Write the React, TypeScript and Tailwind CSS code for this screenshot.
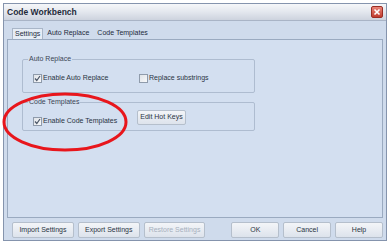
import React from "react";

const font = { fontFamily: '"Liberation Sans", Arial, sans-serif' };

function Check({ checked }: { checked: boolean }) {
  return (
    <span className="w-[9px] h-[9px] border border-[#8f9bab] bg-gradient-to-br from-[#dfe3e8] to-[#f8f9fa] flex items-center justify-center shrink-0">
      {checked && (
        <svg width="7" height="7" viewBox="0 0 7 7">
          <path d="M1 3.5 L2.8 5.5 L6 1" stroke="#4a5566" strokeWidth="1.2" fill="none" />
        </svg>
      )}
    </span>
  );
}

function Btn({ label, w, disabled }: { label: string; w: string; disabled?: boolean }) {
  return (
    <div
      className={`${w} h-[16px] border border-[#b5bfcc] rounded-[2px] bg-gradient-to-b from-[#f3f5f8] to-[#dde3ec] flex items-center justify-center text-[7px] ${disabled ? "text-[#a7b0bd]" : "text-[#2a3443]"}`}
    >
      {label}
    </div>
  );
}

export default function App() {
  return (
    <div className="w-[392px] h-[244px] bg-white relative overflow-hidden" style={font}>
      <div className="absolute left-[3px] top-[3px] w-[384px] h-[238px] border border-[#8594ad] bg-[#cfdbec] flex flex-col">
        <div className="h-[17px] bg-gradient-to-b from-[#f6f7f9] via-[#e3e7ee] to-[#cdd3de] flex items-center justify-between pl-[3px] pr-[3px] border-b border-[#a9b4c6]">
          <span className="text-[8.5px] font-semibold text-[#1f2a3a]">Code Workbench</span>
          <div className="w-[12px] h-[12px] rounded-[2px] bg-gradient-to-b from-[#e98478] to-[#c0392d] border border-[#9a2d24] flex items-center justify-center">
            <svg width="8" height="8" viewBox="0 0 8 8">
              <path d="M1.5 1.5 L6.5 6.5 M6.5 1.5 L1.5 6.5" stroke="white" strokeWidth="1.6" />
            </svg>
          </div>
        </div>
        <div className="flex-1 flex flex-col px-[3px] pt-[6px]">
          <div className="flex items-end h-[12px] text-[7px] text-[#1e2a3c]">
            <div className="ml-[5px] h-[11px] px-[2px] border border-b-0 border-[#a9b6c8] bg-[#e6edf6] flex items-center">Settings</div>
            <div className="ml-[4px] h-[11px] flex items-center">Auto Replace</div>
            <div className="ml-[8px] h-[11px] flex items-center">Code Templates</div>
          </div>
          <div className="w-[376px] h-[179px] border border-[#9aaac0] bg-[#d3dff0] relative">
            <div className="absolute left-[14px] top-[19px] w-[233px] h-[34px] border border-[#aebcd0] rounded-[2px]">
              <span className="absolute left-[5px] -top-[6px] px-[1px] bg-[#d3dff0] text-[7px] text-[#3b4656]">Auto Replace</span>
              <div className="absolute left-[10px] top-[13px] flex items-center gap-[1px] text-[7px] text-[#2a3443]">
                <Check checked />
                <span>Enable Auto Replace</span>
              </div>
              <div className="absolute left-[116px] top-[13px] flex items-center gap-[1px] text-[7px] text-[#2a3443]">
                <Check checked={false} />
                <span>Replace substrings</span>
              </div>
            </div>
            <div className="absolute left-[14px] top-[62px] w-[233px] h-[29px] border border-[#aebcd0] rounded-[2px]">
              <span className="absolute left-[5px] -top-[6px] px-[1px] bg-[#d3dff0] text-[7px] text-[#3b4656]">Code Templates</span>
              <div className="absolute left-[10px] top-[13px] flex items-center gap-[1px] text-[7px] text-[#2a3443]">
                <Check checked />
                <span>Enable Code Templates</span>
              </div>
              <div className="absolute left-[114px] top-[7px] w-[49px] h-[15px] border border-[#b5bfcc] rounded-[2px] bg-gradient-to-b from-[#f3f5f8] to-[#dde3ec] flex items-center justify-center text-[7px] text-[#2a3443]">
                Edit Hot Keys
              </div>
            </div>
          </div>
          <div className="flex items-center mt-[4px] ml-[5px]">
            <Btn label="Import Settings" w="w-[62px]" />
            <div className="w-[4px]" />
            <Btn label="Export Settings" w="w-[62px]" />
            <div className="w-[4px]" />
            <Btn label="Restore Settings" w="w-[62px]" disabled />
            <div className="w-[26px]" />
            <Btn label="OK" w="w-[48px]" />
            <div className="w-[4px]" />
            <Btn label="Cancel" w="w-[48px]" />
            <div className="w-[4px]" />
            <Btn label="Help" w="w-[48px]" />
          </div>
        </div>
      </div>
      <svg className="absolute left-0 top-0" width="392" height="244">
        <ellipse cx="65" cy="122" rx="61" ry="28" fill="none" stroke="#e8161c" strokeWidth="3" />
      </svg>
    </div>
  );
}
